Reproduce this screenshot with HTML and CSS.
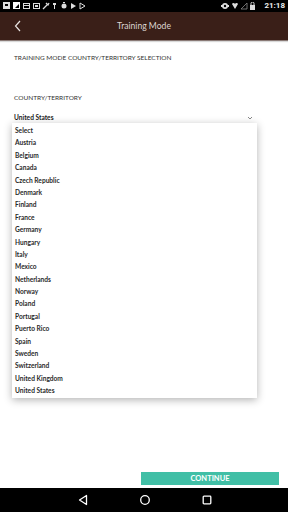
FILE: index.html
```html
<!DOCTYPE html>
<html>
<head>
<meta charset="utf-8">
<link rel="stylesheet" href="styles.css">
</head>
<body>
<div class="screen">
  <div class="statusbar">
    <div class="sb-left">
      <svg width="84" height="8" viewBox="0 0 84 8">
        <rect x="0" y="0" width="7" height="7" fill="#ddd"/><rect x="2" y="2" width="3" height="2" fill="#000"/>
        <rect x="10" y="0" width="7" height="7" fill="#fff"/><path d="M12 6 L16 2 L16 6Z" fill="#000"/>
        <rect x="20.5" y="1.5" width="6" height="5" fill="none" stroke="#ddd"/><line x1="20" y1="3.5" x2="27" y2="3.5" stroke="#ddd"/>
        <rect x="30.5" y="1.5" width="6" height="5" fill="none" stroke="#ddd"/><rect x="32" y="3" width="3" height="2" fill="#ddd"/>
        <path d="M40 7 L44 3 M43 1 L45 3 L46 1" stroke="#ddd" stroke-width="1.3" fill="none"/>
        <path d="M50 1 h3 v2 h-1 v4 h-1 v-4 h-1z" fill="#ddd"/>
        <circle cx="61" cy="4" r="2.5" fill="#ddd"/><rect x="60" y="0" width="2" height="1" fill="#ddd"/>
        <path d="M68 1 L73 4 L68 7Z" fill="#ddd"/>
        <path d="M77 1 v6 M77 1 L82 4 L77 7" stroke="#ddd" fill="none"/>
      </svg>
    </div>
    <div class="sb-right">
      <svg width="40" height="8" viewBox="0 0 40 8">
        <circle cx="4" cy="4" r="3" fill="#ddd"/><rect x="0" y="3" width="8" height="2" fill="#ddd"/><circle cx="4" cy="4" r="1.2" fill="#000"/>
        <path d="M11 2 a1.6 1.6 0 0 1 3 0 a1.6 1.6 0 0 1 3 0 L14 7Z" fill="#ddd"/>
        <path d="M20 7 L26 1 L26 7Z" fill="none" stroke="#888" stroke-width="0.8"/>
        <rect x="29" y="3" width="5" height="5" fill="#ddd"/><path d="M30 3 v-1.5 a1.5 1.5 0 0 1 3 0 v1.5" stroke="#ddd" fill="none"/>
      </svg>
      <span class="time">21:18</span>
    </div>
  </div>
  <header class="toolbar">
    <svg class="back" width="8" height="12" viewBox="0 0 8 12"><path d="M6 1 L1.5 6 L6 11" stroke="#e8e2e0" stroke-width="1.2" fill="none"/></svg>
    <h1 class="title">Training Mode</h1>
  </header>
  <main class="content">
    <p class="heading">TRAINING MODE COUNTRY/TERRITORY SELECTION</p>
    <p class="label">COUNTRY/TERRITORY</p>
    <div class="select">
      <span>United States</span>
      <svg width="6" height="4" viewBox="0 0 6 4"><path d="M1 1 L3 3 L5 1" stroke="#888" stroke-width="1" fill="none"/></svg>
    </div>
    <ul class="menu">
      <li>Select</li><li>Austria</li><li>Belgium</li><li>Canada</li><li>Czech Republic</li><li>Denmark</li><li>Finland</li><li>France</li><li>Germany</li><li>Hungary</li><li>Italy</li><li>Mexico</li><li>Netherlands</li><li>Norway</li><li>Poland</li><li>Portugal</li><li>Puerto Rico</li><li>Spain</li><li>Sweden</li><li>Switzerland</li><li>United Kingdom</li><li>United States</li>
    </ul>
    <div class="actions"><button class="continue">CONTINUE</button></div>
  </main>
  <nav class="navbar">
    <svg width="12" height="12" viewBox="0 0 12 12"><path d="M9.5 1.5 L2.5 6 L9.5 10.5Z" stroke="#fff" stroke-width="1.3" fill="none" stroke-linejoin="round"/></svg>
    <svg width="12" height="12" viewBox="0 0 12 12"><circle cx="6" cy="6" r="4.3" stroke="#fff" stroke-width="1.3" fill="none"/></svg>
    <svg width="12" height="12" viewBox="0 0 12 12"><rect x="2.2" y="2.2" width="7.6" height="7.6" rx="0.8" stroke="#fff" stroke-width="1.3" fill="none"/></svg>
  </nav>
</div>
</body>
</html>
```
FILE: styles.css
```css
* { box-sizing: border-box; }
html, body { margin: 0; padding: 0; }
body { width: 288px; height: 512px; overflow: hidden; font-family: Lato, "Open Sans", sans-serif; background: #fff; }
.screen { display: flex; flex-direction: column; height: 512px; }
.statusbar { height: 12px; background: #000; display: flex; justify-content: space-between; align-items: center; padding: 0 3px 0 3px; }
.sb-left, .sb-right { display: flex; align-items: center; gap: 3px; }
.time { color: #eee; font-family: Roboto, sans-serif; font-size: 8px; font-weight: 700; line-height: 8px; }
.toolbar { height: 29px; background: #3a1f18; display: flex; align-items: center; justify-content: center; position: relative; border-bottom: 1px solid #8a7a76; box-shadow: 0 1px 1px rgba(0,0,0,0.15); }
.back { position: absolute; left: 14px; top: 8px; }
.title { margin: 0; color: #ddd6d3; font-size: 8.6px; font-weight: 400; }
.content { flex: 1; position: relative; padding: 12px 14px 0 14px; display: flex; flex-direction: column; }
.heading { margin: 0; font-size: 6.5px; color: #333; line-height: 9px; }
.label { margin: 31px 0 0; font-size: 6.5px; color: #333; line-height: 9px; }
.select { margin-top: 11px; display: flex; justify-content: space-between; align-items: center; padding-right: 21px; font-size: 6.6px; font-weight: 700; color: #222; line-height: 9px; }
.menu { position: absolute; left: 12px; top: 82px; width: 245px; margin: 0; padding: 1px 0 1px; list-style: none; background: #fff; box-shadow: 0 2px 8px rgba(0,0,0,0.3); }
.menu li { height: 12.4px; line-height: 12px; padding-left: 3px; font-size: 6.6px; font-weight: 700; color: #2a2a2a; }
.actions { margin-top: auto; display: flex; justify-content: flex-end; padding: 0 9px 3px 0; margin-right: -14px; }
.continue { width: 138px; height: 13px; border: 0; background: #41bfa6; color: #fff; font-family: Lato, sans-serif; font-size: 7.5px; font-weight: 700; padding: 0; line-height: 13px; }
.navbar { height: 24px; background: #000; display: flex; justify-content: center; align-items: center; gap: 50px; padding-left: 2px; }
```
